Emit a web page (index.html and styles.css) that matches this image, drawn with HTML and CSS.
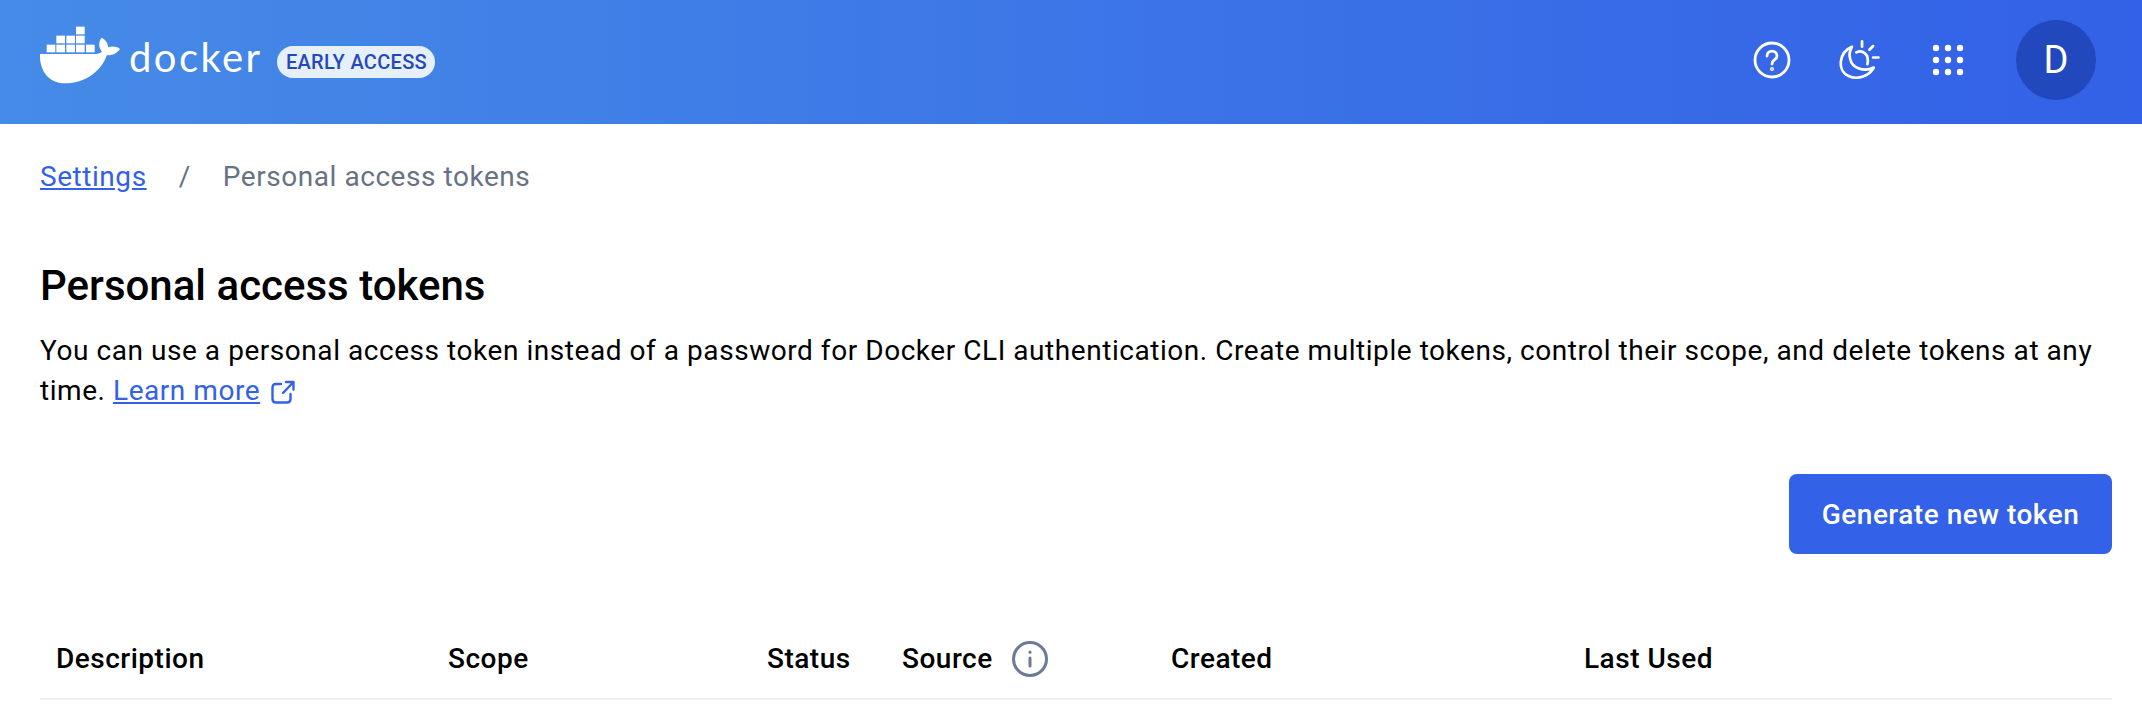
FILE: index.html
```html
<!DOCTYPE html>
<html lang="en">
<head>
    <meta charset="UTF-8">
    <meta name="viewport" content="width=device-width, initial-scale=1.0">
    <title>Personal access tokens</title>
    <link rel="stylesheet" href="styles.css">
</head>
<body>

<header class="topbar">
    <div class="brand">
        <svg class="whale" viewBox="30 30 240 180" fill="#fff">
            <rect x="138" y="35" width="26" height="23"/>
            <rect x="79" y="62" width="26" height="23"/>
            <rect x="109" y="62" width="26" height="23"/>
            <rect x="138" y="62" width="26" height="23"/>
            <rect x="50" y="89" width="26" height="23"/>
            <rect x="79" y="89" width="26" height="23"/>
            <rect x="109" y="89" width="26" height="23"/>
            <rect x="138" y="89" width="26" height="23"/>
            <rect x="168" y="89" width="26" height="23"/>
            <path d="M30 117 H190 C203 117 211 115 216 110 C205 98 205 80 215 68 C228 75 235 86 234 97 C245 93 260 94 270 102 C262 115 245 123 231 120 C215 165 170 205 105 205 C50 205 28 160 30 117 Z"/>
        </svg>
        <span class="wordmark">docker</span>
        <span class="badge">EARLY ACCESS</span>
    </div>
    <nav class="topnav">
        <span class="navicon">
            <svg width="40" height="40" viewBox="0 0 40 40" fill="none" stroke="#fff" stroke-width="2.8" stroke-linecap="round">
                <circle cx="20" cy="20" r="17"/>
                <path d="M15 16 C15 9.5 25 9.5 25 16 C25 20 20 19.5 20 24"/>
                <circle cx="20" cy="29" r="0.6" fill="#fff"/>
            </svg>
        </span>
        <span class="navicon">
            <svg width="44" height="42" viewBox="354 120 130 125" fill="none" stroke="#fff" stroke-width="8" stroke-linecap="round" stroke-linejoin="round">
                <path d="M395 143 C355 160 350 215 385 230 C415 245 450 225 460 205 C430 220 395 205 390 180 C385 165 388 155 395 143 Z"/>
                <path d="M408 160 C425 150 448 165 441 195"/>
                <path d="M425 127 V143 M447 152 L458 141 M458 175 H474"/>
            </svg>
        </span>
        <span class="navicon">
            <svg width="32" height="32" viewBox="0 0 32 32" fill="#fff">
                <circle cx="4" cy="4" r="3.2"/><circle cx="16" cy="4" r="3.2"/><circle cx="28" cy="4" r="3.2"/>
                <circle cx="4" cy="16" r="3.2"/><circle cx="16" cy="16" r="3.2"/><circle cx="28" cy="16" r="3.2"/>
                <circle cx="4" cy="28" r="3.2"/><circle cx="16" cy="28" r="3.2"/><circle cx="28" cy="28" r="3.2"/>
            </svg>
        </span>
        <span class="avatar">D</span>
    </nav>
</header>

<main class="content">
    <div class="breadcrumb">
        <a href="#">Settings</a>
        <span class="sep">/</span>
        <span class="current">Personal access tokens</span>
    </div>

    <h1>Personal access tokens</h1>
    <p class="intro">
        You can use a personal access token instead of a password for Docker CLI authentication. Create multiple tokens, control their scope, and delete tokens at any time.
        <a href="#">Learn more</a>
        <svg class="extlink" width="24" height="24" viewBox="0 0 24 24" fill="none" stroke="#3361e7" stroke-width="2.4" stroke-linecap="round" stroke-linejoin="round">
            <path d="M10 4 H5 C3 4 1.500 5.500 1.500 7.500 V19 C1.500 21 3 22.500 5 22.500 H16 C18 22.500 19.500 21 19.500 19 V14"/>
            <path d="M12 13 L22 2.500 M15 2 H22.500 V9.500"/>
        </svg>
    </p>

    <div class="actions">
        <button>Generate new token</button>
    </div>

    <div class="tablehead">
        <div>Description</div>
        <div>Scope</div>
        <div>Status</div>
        <div class="withicon">Source
            <svg width="36" height="36" viewBox="0 0 36 36" fill="none" stroke="#6c7a96" stroke-width="3" stroke-linecap="round">
                <circle cx="18" cy="18" r="16.500"/>
                <path d="M18 17 V25"/>
                <path d="M18 11 V11.200"/>
            </svg>
        </div>
        <div>Created</div>
        <div>Last Used</div>
    </div>
</main>

</body>
</html>
```

FILE: styles.css
```css
* {
    margin: 0;
    padding: 0;
    box-sizing: border-box;
}

body {
    font-family: 'Roboto', sans-serif;
    background-color: #fff;
    color: #000;
    overflow: hidden;
}

a {
    color: #3361e7;
}

.topbar {
    height: 124px;
    padding: 0 46px 0 40px;
    display: flex;
    justify-content: space-between;
    align-items: center;
    background: linear-gradient(90deg, #468be7, #3361e7);
}

.brand {
    display: flex;
    align-items: center;
}

.whale {
    width: 80px;
    height: 60px;
    margin-bottom: 14px;
}

.wordmark {
    margin-left: 9px;
    margin-bottom: 10px;
    font-family: 'Lato', sans-serif;
    font-weight: 400;
    font-size: 40px;
    letter-spacing: 2.4px;
    color: #fff;
}

.badge {
    margin-left: 15px;
    height: 32px;
    padding: 0 8.5px;
    display: flex;
    align-items: center;
    border-radius: 16px;
    background-color: #e5f0fb;
    color: #2448bb;
    font-size: 20px;
    font-weight: 500;
    letter-spacing: 0.3px;
}

.topnav {
    margin-bottom: 4px;
    display: flex;
    align-items: center;
    gap: 40px;
}

.navicon {
    width: 48px;
    height: 48px;
    display: flex;
    justify-content: center;
    align-items: center;
}

.avatar {
    width: 80px;
    height: 80px;
    margin-left: 4px;
    display: flex;
    justify-content: center;
    align-items: center;
    border-radius: 50%;
    background-color: #2148bc;
    color: #fff;
    font-size: 38px;
}

.content {
    padding: 0 30px 0 40px;
}

.breadcrumb {
    height: 104px;
    display: flex;
    align-items: center;
    font-size: 28px;
    letter-spacing: 0.55px;
    color: #677285;
}

.sep {
    margin: 0 32px;
}

h1 {
    font-size: 42px;
    font-weight: 500;
    line-height: 48px;
    margin-top: 34px;
}

.intro {
    margin-top: 21px;
    font-size: 28px;
    line-height: 40px;
    letter-spacing: 0.55px;
}

.extlink {
    vertical-align: -4px;
    margin-left: 3px;
}

.actions {
    margin-top: 63px;
    display: flex;
    justify-content: flex-end;
}

button {
    width: 323px;
    height: 80px;
    border: none;
    border-radius: 8px;
    background-color: #3361e7;
    color: #fff;
    font-family: 'Roboto', sans-serif;
    font-size: 28px;
    font-weight: 500;
    letter-spacing: 0.5px;
}

.tablehead {
    margin-top: 60px;
    height: 86px;
    padding-left: 16px;
    padding-top: 5px;
    display: grid;
    grid-template-columns: 392px 319px 135px 269px 413px 1fr;
    align-items: center;
    border-bottom: 2px solid #f0f0f2;
    font-size: 28px;
    font-weight: 500;
    letter-spacing: 0.5px;
}

.withicon {
    display: flex;
    align-items: center;
    gap: 19px;
}
```
